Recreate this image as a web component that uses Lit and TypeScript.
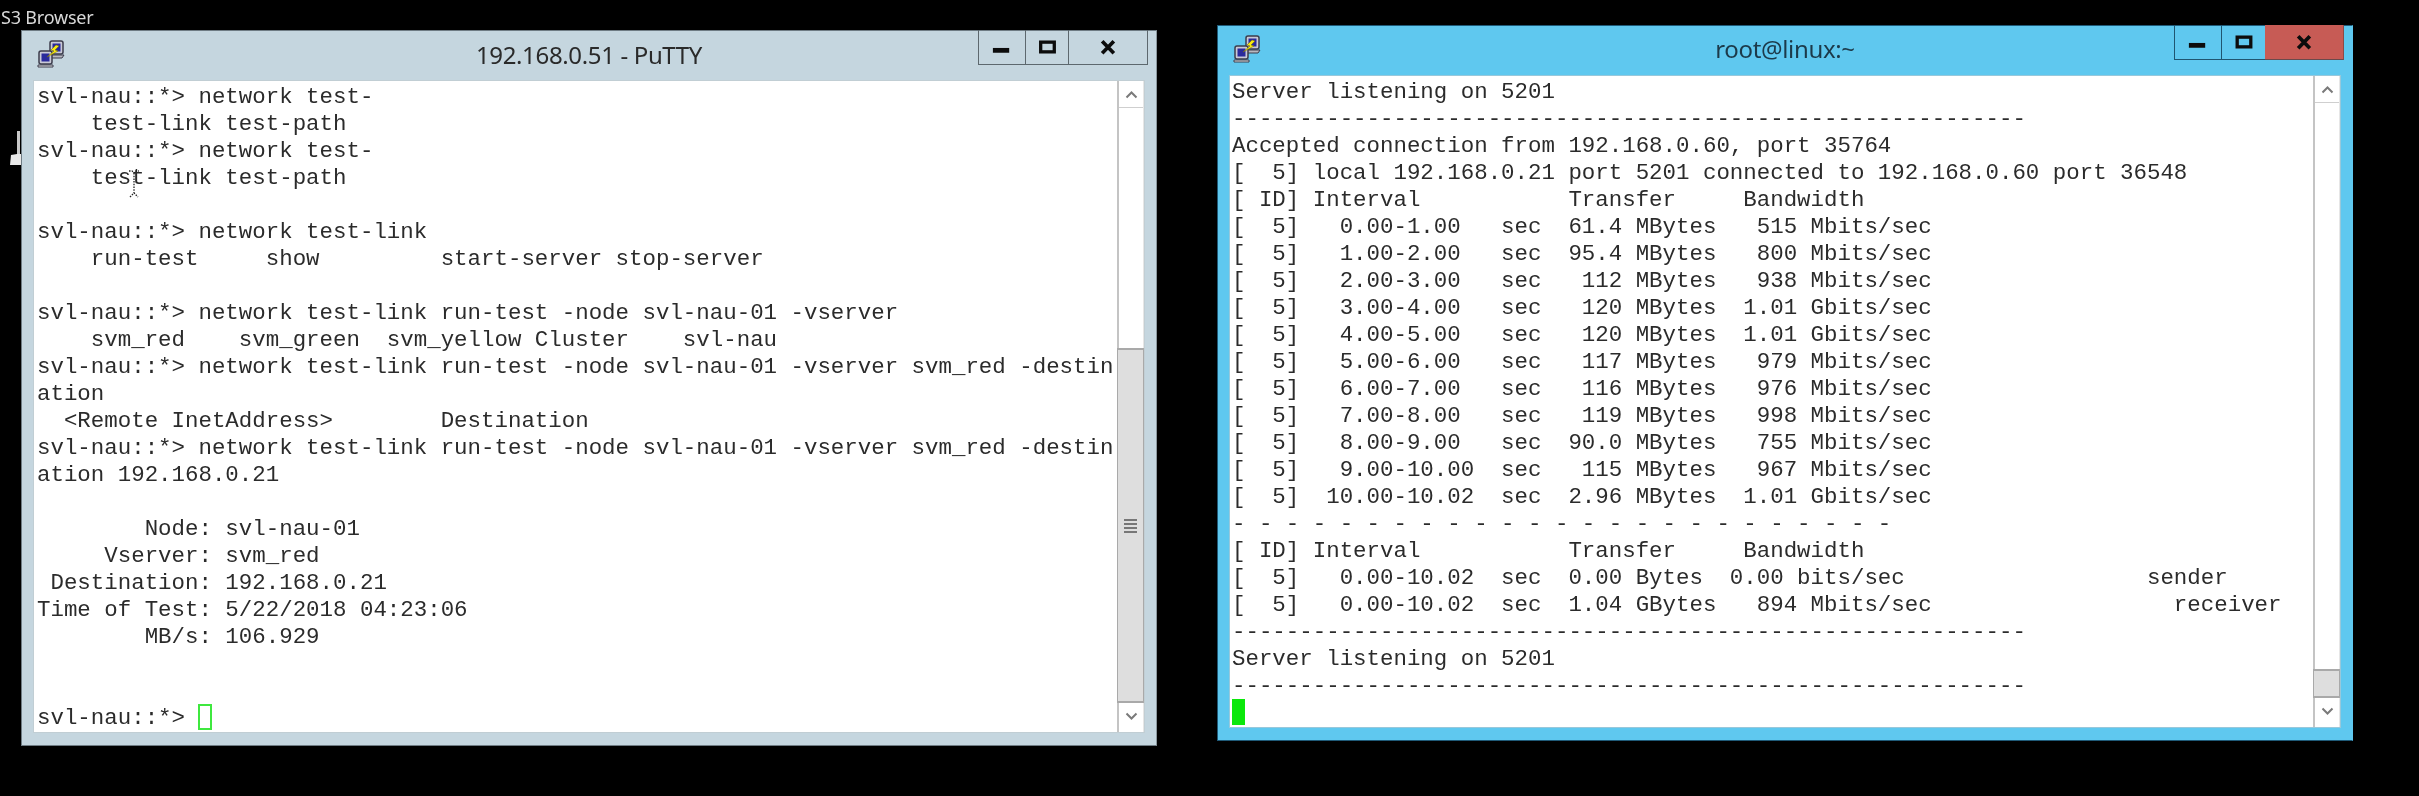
import { LitElement, html, css, svg } from "lit";
import { customElement } from "lit/decorators.js";

const leftLines = [
  "svl-nau::*> network test-",
  "    test-link test-path",
  "svl-nau::*> network test-",
  "    test-link test-path",
  "",
  "svl-nau::*> network test-link",
  "    run-test     show         start-server stop-server",
  "",
  "svl-nau::*> network test-link run-test -node svl-nau-01 -vserver",
  "    svm_red    svm_green  svm_yellow Cluster    svl-nau",
  "svl-nau::*> network test-link run-test -node svl-nau-01 -vserver svm_red -destin",
  "ation",
  "  <Remote InetAddress>        Destination",
  "svl-nau::*> network test-link run-test -node svl-nau-01 -vserver svm_red -destin",
  "ation 192.168.0.21",
  "",
  "        Node: svl-nau-01",
  "     Vserver: svm_red",
  " Destination: 192.168.0.21",
  "Time of Test: 5/22/2018 04:23:06",
  "        MB/s: 106.929",
  "",
  "",
  "svl-nau::*> ",
];

const dashes = "-".repeat(59);
const rightLines = [
  "Server listening on 5201",
  dashes,
  "Accepted connection from 192.168.0.60, port 35764",
  "[  5] local 192.168.0.21 port 5201 connected to 192.168.0.60 port 36548",
  "[ ID] Interval           Transfer     Bandwidth",
  "[  5]   0.00-1.00   sec  61.4 MBytes   515 Mbits/sec",
  "[  5]   1.00-2.00   sec  95.4 MBytes   800 Mbits/sec",
  "[  5]   2.00-3.00   sec   112 MBytes   938 Mbits/sec",
  "[  5]   3.00-4.00   sec   120 MBytes  1.01 Gbits/sec",
  "[  5]   4.00-5.00   sec   120 MBytes  1.01 Gbits/sec",
  "[  5]   5.00-6.00   sec   117 MBytes   979 Mbits/sec",
  "[  5]   6.00-7.00   sec   116 MBytes   976 Mbits/sec",
  "[  5]   7.00-8.00   sec   119 MBytes   998 Mbits/sec",
  "[  5]   8.00-9.00   sec  90.0 MBytes   755 Mbits/sec",
  "[  5]   9.00-10.00  sec   115 MBytes   967 Mbits/sec",
  "[  5]  10.00-10.02  sec  2.96 MBytes  1.01 Gbits/sec",
  "- ".repeat(24) + "-",
  "[ ID] Interval           Transfer     Bandwidth",
  "[  5]   0.00-10.02  sec  0.00 Bytes  0.00 bits/sec                  sender",
  "[  5]   0.00-10.02  sec  1.04 GBytes   894 Mbits/sec                  receiver",
  dashes,
  "Server listening on 5201",
  dashes,
  "",
];

const puttyIcon = svg`
  <rect x="13" y="1" width="13" height="13" rx="2" fill="#c9c9d6" stroke="#3c3c4c" stroke-width="1.5"/>
  <rect x="15.5" y="3.5" width="8" height="8" fill="#2a2a9c"/>
  <path d="M11 15h16l-2 3H13z" fill="#b8b8c0" stroke="#3c3c4c"/>
  <rect x="2" y="11" width="13" height="13" rx="2" fill="#c9c9d6" stroke="#3c3c4c" stroke-width="1.5"/>
  <rect x="4.5" y="13.5" width="8" height="8" fill="#2a2a9c"/>
  <path d="M1 25h15v2H1z" fill="#e2e2e2" stroke="#3c3c4c"/>
  <path d="M19 5l-5 5 3 1-7 6 11-6-3-1 4-4z" fill="#f7ea12" stroke="#7a7000" stroke-width=".5"/>
`;

@customElement("term-window")
class TermWindow extends LitElement {
  static properties = {
    label: {},
    lines: { attribute: false },
    variant: {},
    track: { type: Number },
    thumb: { type: Number },
    solid: { type: Boolean },
  };
  declare label: string;
  declare lines: string[];
  declare variant: string;
  declare track: number;
  declare thumb: number;
  declare solid: boolean;

  static styles = css`
    :host { display: block; position: absolute; box-sizing: border-box; width: 1136px; }
    .win {
      box-sizing: border-box; position: relative; display: flex; flex-direction: column;
      padding: 0 12px 13px; border: 1px solid transparent;
    }
    .blue.win { background: #5fc8ef; border-color: #1f5a78; border-right-color: #5fc8ef; }
    .grey.win { background: #c5d6df; border-color: #6f7c84; border-right-color: #8b979e; }
    .bar { height: 50px; display: flex; align-items: flex-start; justify-content: center; position: relative; }
    .icon { position: absolute; left: 3px; top: 9px; width: 28px; height: 28px; }
    .label {
      font: 400 24px/1 "Noto Sans", sans-serif; color: #2a2a2a; letter-spacing: -0.35px;
    }
    .blue .label { padding-top: 11px; color: #1c3a4a; }
    .grey .label { padding-top: 12px; }
    .btns { position: absolute; top: -1px; right: -4px; display: flex; height: 35px; }
    .btn { box-sizing: border-box; height: 35px; border-bottom: 1.5px solid #5d686e; border-right: 1.5px solid #5d686e; }
    .btn svg { display: block; width: 100%; height: 100%; }
    .blue .btn { border-color: #1f5570; }
    .btn.min { width: 48px; border-left: 1.5px solid #5d686e; }
    .blue .btn.min { border-left-color: #1f5570; }
    .btn.max { width: 43px; }
    .btn.close { width: 79px; }
    .blue .btn.close { background: #c75b55; border-right-color: #8d4a47; border-bottom-color: #6a4a4c; }
    .blue .btn.max { border-right: none; }
    .client {
      display: flex; height: 651px; background: #fff;
      box-shadow: 0 0 0 1px rgba(190, 200, 205, 0.6);
    }
    .text {
      flex: 1; min-width: 0; margin: 0; padding: 3px 0 0 3px;
      font: 400 22.43px/27px "Liberation Mono", monospace; color: #2b2b2b;
      white-space: pre; overflow: hidden;
    }
    .blue .text { padding-left: 2px; }
    .row { height: 27px; }
    .scroll { width: 27px; display: flex; flex-direction: column; box-sizing: border-box; border-left: 2px solid #c4c4c4; border-right: 1px solid #e6e6e6; }
    .arrow { height: 27px; flex: none; display: flex; align-items: center; justify-content: center; }
    .arrow.up { border-bottom: 1px solid #cfcfcf; box-sizing: border-box; }
    .arrow svg { width: 13px; height: 9px; }
    .gap { flex: none; }
    .thumb {
      flex: none; box-sizing: border-box; background: #dedede; border: 1px solid #a9a9a9;
      border-top-width: 2px; border-bottom-width: 2px;
      display: flex; align-items: center; justify-content: center; margin-left: -2px; margin-right: -1px;
    }
    .grip { width: 13px; height: 14px; background: repeating-linear-gradient(#777 0 2px, #dedede 2px 4px); }
    .cursor { display: inline-block; box-sizing: border-box; width: 14px; height: 26px; vertical-align: top; margin-top: -1px; }
    .cursor.hollow { border: 2px solid #3fe83f; }
    .cursor.fill { background: #0be80b; width: 13px; }
  `;

  render() {
    const last = this.lines.length - 1;
    return html`
      <div class="win ${this.variant}">
        <div class="bar">
          <svg class="icon" viewBox="0 0 28 28">${puttyIcon}</svg>
          <span class="label">${this.label}</span>
          <div class="btns">
            <div class="btn min"><svg viewBox="0 0 48 35"><rect x="14.5" y="18.5" width="17" height="5" fill="#0c0c0c"/></svg></div>
            <div class="btn max"><svg viewBox="0 0 43 35"><rect x="15" y="12.5" width="14" height="10" fill="none" stroke="#0c0c0c" stroke-width="3.4"/></svg></div>
            <div class="btn close"><svg viewBox="0 0 79 35"><path d="M33.5 11.5l12 12.5M45.5 11.5L33.5 24" stroke="#0c0c0c" stroke-width="3.8" fill="none"/></svg></div>
          </div>
        </div>
        <div class="client">
          <div class="text">${this.lines.map(
            (l, i) => html`<div class="row">${l}${i === last
              ? html`<span class="cursor ${this.solid ? "fill" : "hollow"}"></span>`
              : ""}</div>`
          )}</div>
          <div class="scroll">
            <div class="arrow up"><svg viewBox="0 0 13 9"><path d="M1.5 7.5l5-5 5 5" fill="none" stroke="#7a7a7a" stroke-width="2"/></svg></div>
            <div class="gap" style="height:${this.track}px"></div>
            <div class="thumb" style="height:${this.thumb}px">${this.thumb > 100 ? html`<div class="grip"></div>` : ""}</div>
            <div class="arrow"><svg viewBox="0 0 13 9"><path d="M1.5 1.5l5 5 5-5" fill="none" stroke="#7a7a7a" stroke-width="2"/></svg></div>
          </div>
        </div>
      </div>
    `;
  }
}

@customElement("app-root")
class AppRoot extends LitElement {
  static styles = css`
    :host { display: block; position: relative; width: 2419px; height: 796px; background: #000; overflow: hidden; }
    .desktop-label { position: absolute; left: 1px; top: 5px; font: 400 18px/24px "Noto Sans", sans-serif; color: #d8d8d8; letter-spacing: -0.2px; }
    .stub { position: absolute; left: 9px; top: 129px; width: 13px; height: 37px; }
    .ibeam { position: absolute; left: 127px; top: 169px; width: 14px; height: 30px; z-index: 2; }
    .w-left { left: 21px; top: 30px; }
    .w-right { left: 1217px; top: 25px; }
    .filter { position: absolute; inset: 0; filter: blur(0.45px); }
  `;
  render() {
    return html`
      <div class="filter">
        <div class="desktop-label">S3 Browser</div>
        <svg class="stub" viewBox="0 0 13 37">
          <path d="M8 2h3v23H8z" fill="#c8c8c8"/><path d="M2 26l6-1h5v11H1z" fill="#e8e8e8"/>
        </svg>
        <term-window class="w-left" label="192.168.0.51 - PuTTY" variant="grey" .lines=${leftLines} track="240" thumb="355"></term-window>
        <term-window class="w-right" label="root@linux:~" variant="blue" .lines=${rightLines} track="566" thumb="29" solid></term-window>
        <svg class="ibeam" viewBox="0 0 14 30">
          <path d="M2 2h3l2 2 2-2h3M7 4v20M3 28l4-4 4 4" fill="none" stroke="#222" stroke-width="1.3" stroke-dasharray="1.5 1.2"/>
        </svg>
      </div>
    `;
  }
}
